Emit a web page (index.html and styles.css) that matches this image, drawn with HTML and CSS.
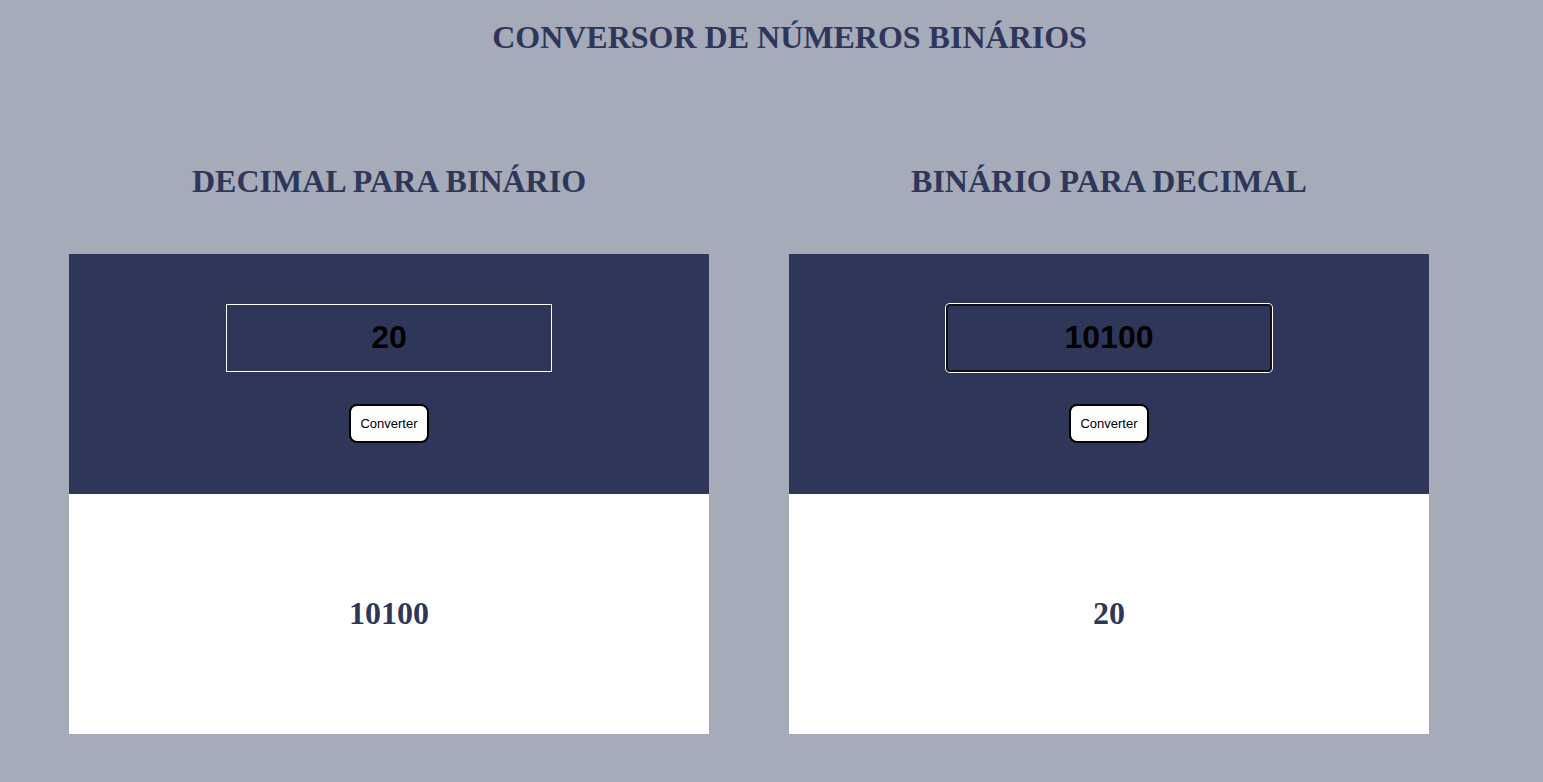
FILE: index.html
```html
<!DOCTYPE html>
<html lang="pt-BR">
<head>
<meta charset="utf-8">
<title>Conversor de Números Binários</title>
<link rel="stylesheet" href="styles.css">
</head>
<body>
<h1 class="title">CONVERSOR DE NÚMEROS BINÁRIOS</h1>
<main class="columns">
  <section class="column">
    <h2 class="heading">DECIMAL PARA BINÁRIO</h2>
    <div class="card">
      <div class="card-top">
        <input class="field" type="text" value="20">
        <button class="btn" type="button">Converter</button>
      </div>
      <div class="card-bottom">
        <p class="result">10100</p>
      </div>
    </div>
  </section>
  <section class="column">
    <h2 class="heading">BINÁRIO PARA DECIMAL</h2>
    <div class="card">
      <div class="card-top">
        <input class="field field-focus" type="text" value="10100">
        <button class="btn" type="button">Converter</button>
      </div>
      <div class="card-bottom">
        <p class="result">20</p>
      </div>
    </div>
  </section>
</main>
</body>
</html>
```
FILE: styles.css
```css
html, body {
  margin: 0;
  padding: 0;
}
body {
  background: #a5abb9;
  color: #2e375a;
  font-family: "Liberation Serif", "Times New Roman", serif;
  min-height: 782px;
}
.title {
  margin: 19px 0 0 0;
  padding-left: 36px;
  text-align: center;
  font-size: 32px;
  font-weight: bold;
  line-height: 37px;
}
.columns {
  display: flex;
  gap: 80px;
  padding-left: 69px;
  margin-top: 107px;
}
.column {
  width: 640px;
  display: flex;
  flex-direction: column;
  align-items: stretch;
}
.heading {
  margin: 0 0 54px 0;
  text-align: center;
  font-size: 32px;
  font-weight: bold;
  line-height: 37px;
}
.card {
  display: flex;
  flex-direction: column;
}
.card-top {
  background: #2e375a;
  height: 240px;
  box-sizing: border-box;
  padding-top: 50px;
  display: flex;
  flex-direction: column;
  align-items: center;
  gap: 32px;
}
.field {
  box-sizing: border-box;
  width: 326px;
  height: 68px;
  margin: 0;
  padding: 0 0 2px 0;
  background: transparent;
  border: 1px solid #ffffff;
  border-radius: 0;
  text-align: center;
  font-family: "Liberation Sans", Arial, sans-serif;
  font-size: 32px;
  font-weight: bold;
  color: #000000;
  outline: none;
}
.field-focus {
  border-color: #101010;
  border-radius: 4px;
  box-shadow: 0 0 0 1px #ffffff, inset 0 0 0 1px #101010;
}
.btn {
  box-sizing: border-box;
  width: 80px;
  height: 39px;
  margin: 0;
  padding: 0;
  background: #ffffff;
  border: 2px solid #000000;
  border-radius: 8px;
  font-family: "Liberation Sans", Arial, sans-serif;
  font-size: 13px;
  color: #000000;
}
.card-bottom {
  background: #ffffff;
  height: 240px;
  display: flex;
  align-items: center;
  justify-content: center;
}
.result {
  margin: 0 0 2px 0;
  font-size: 32px;
  font-weight: bold;
  line-height: 37px;
  color: #2e375a;
}
```
